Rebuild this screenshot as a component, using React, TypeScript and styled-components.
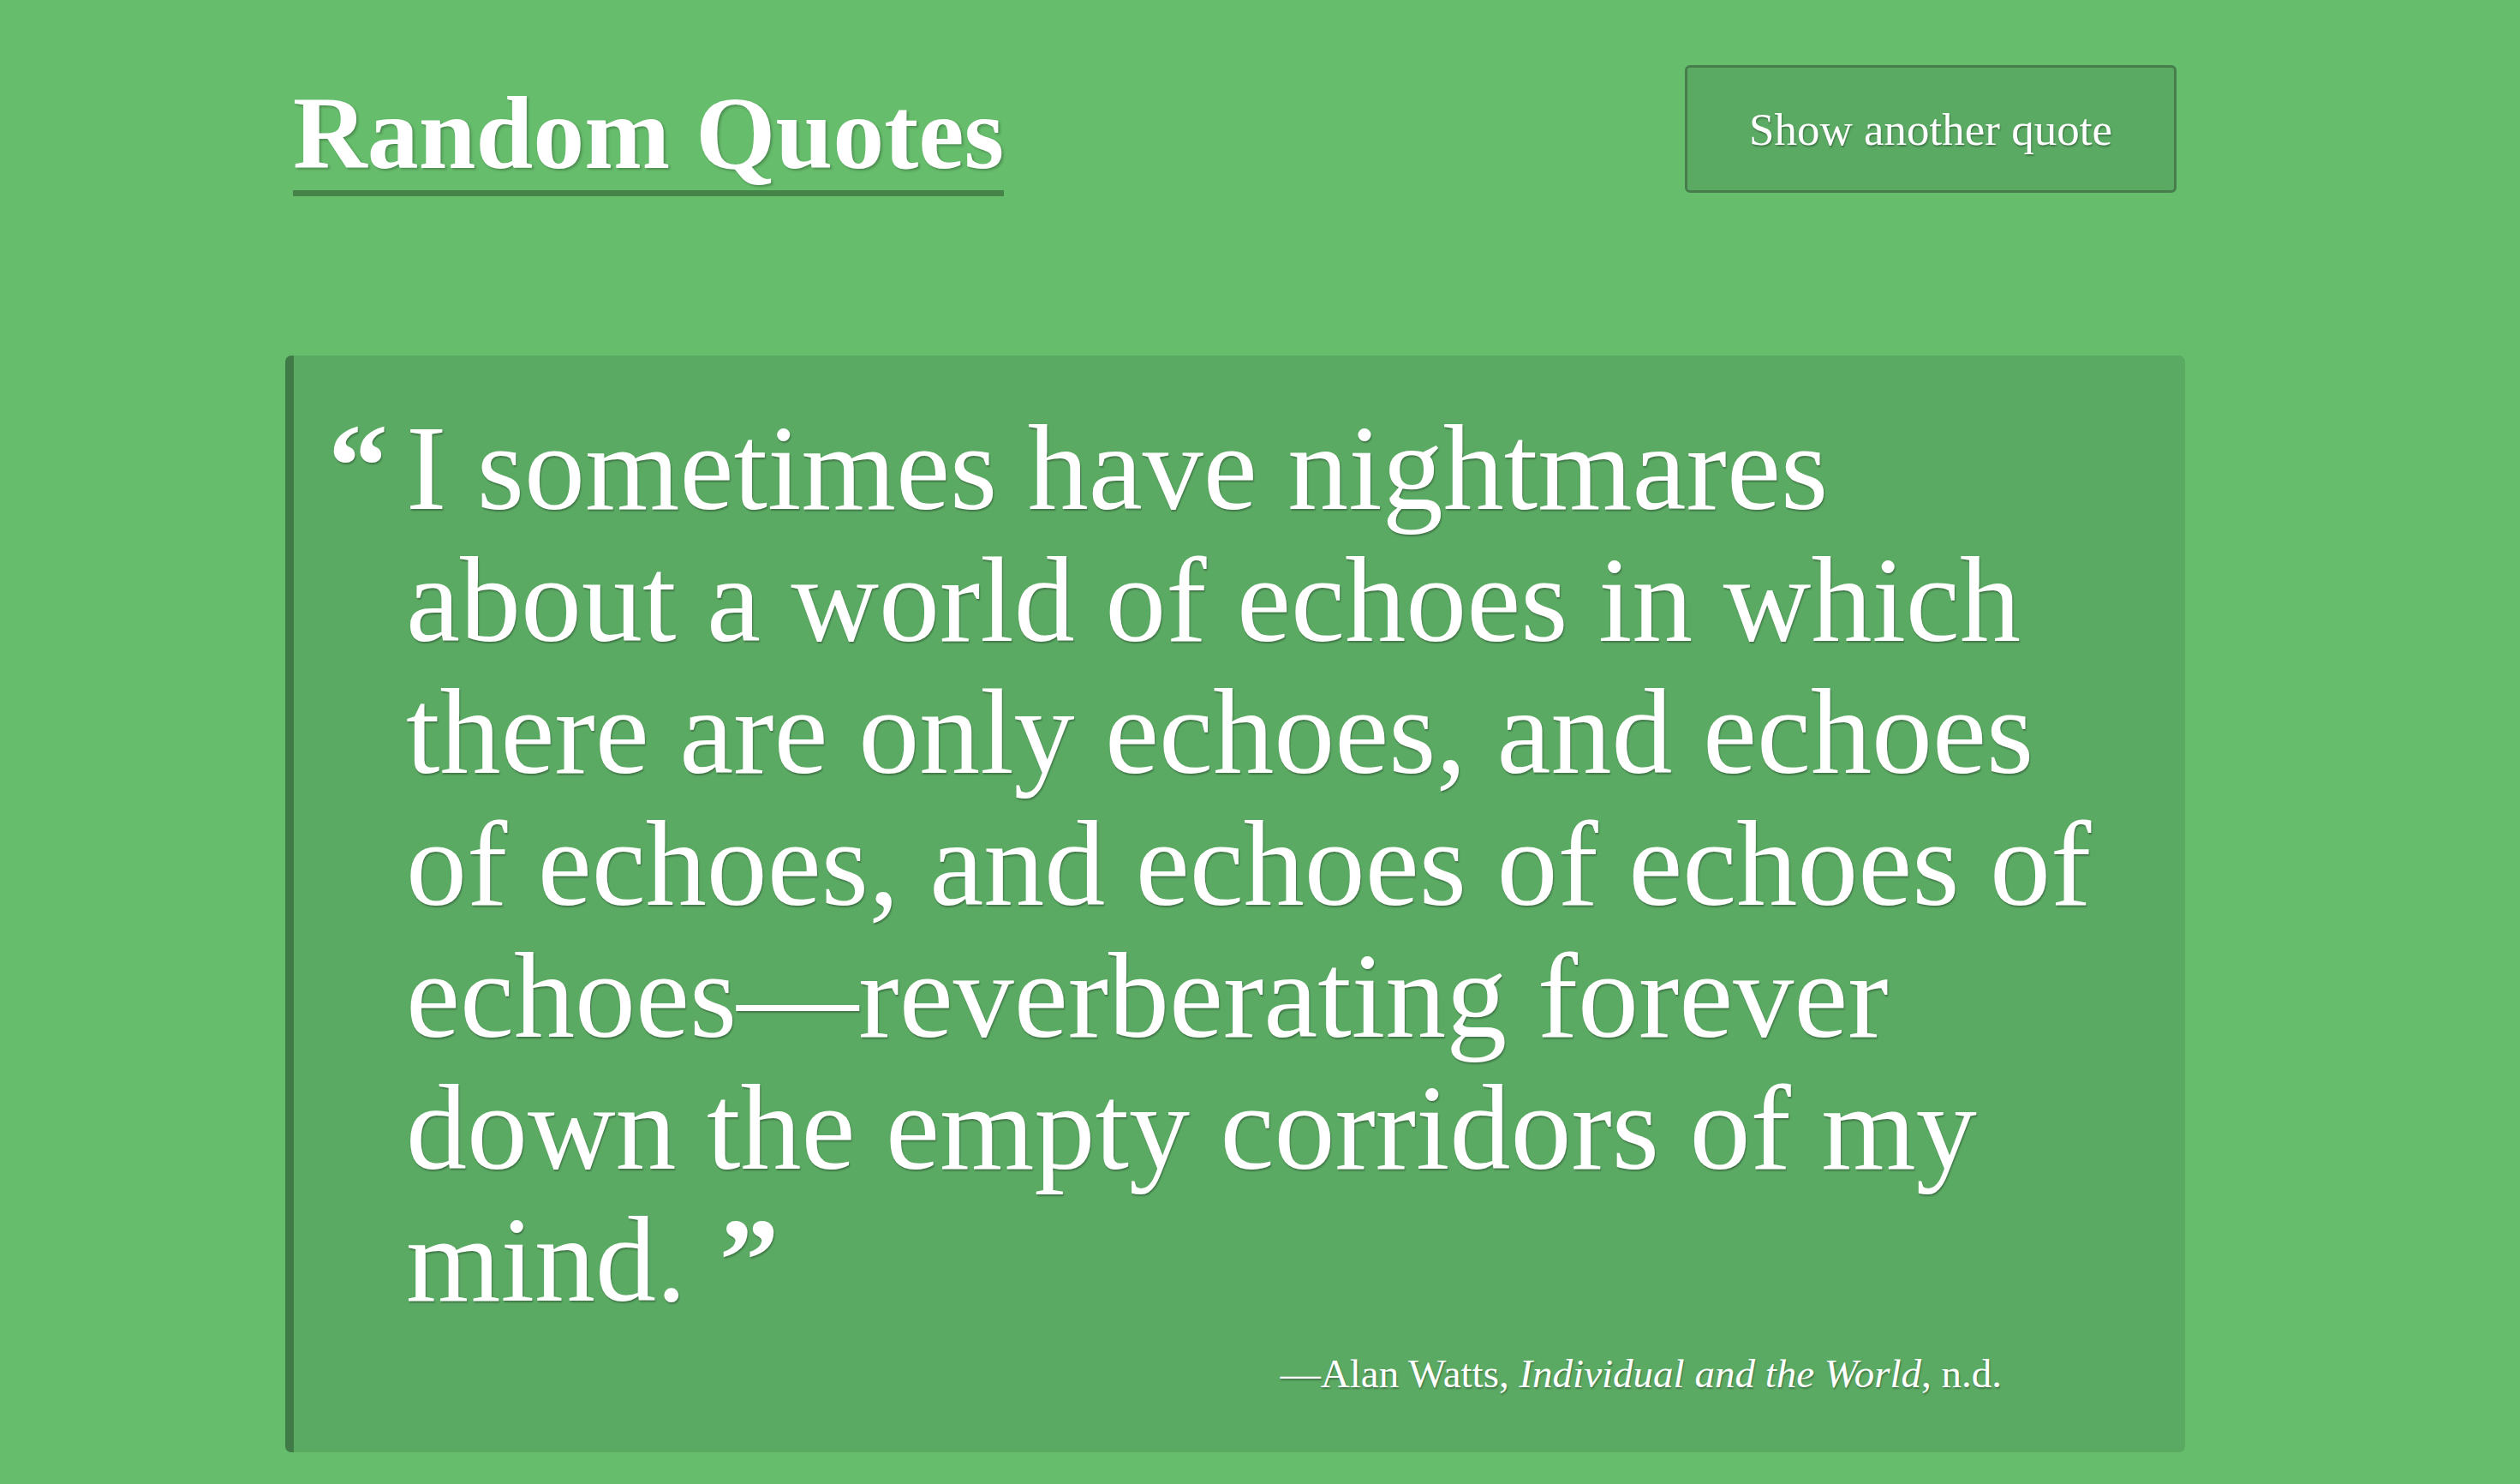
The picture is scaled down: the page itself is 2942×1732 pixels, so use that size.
import React from "react";
import styled, { createGlobalStyle } from "styled-components";

const Global = createGlobalStyle`
  html, body {
    margin: 0;
    padding: 0;
    background: #66bd6c;
  }
  body {
    font-family: "Liberation Serif", "DejaVu Serif", serif;
    color: #ffffff;
  }
`;

const Page = styled.div`
  min-height: 1732px;
  background: #66bd6c;
  padding-left: 333px;
  box-sizing: border-box;
`;

const Container = styled.div`
  width: 2218px;
`;

const Header = styled.header`
  display: flex;
  justify-content: space-between;
  align-items: flex-start;
  padding: 76px 10px 0 9px;
`;

const Title = styled.h1`
  margin: 20px 0 0 0;
  font-family: "Liberation Serif", serif;
  font-weight: 700;
  font-size: 120px;
  line-height: 1;
  padding-bottom: 6px;
  border-bottom: 7px solid #468349;
  color: #ffffff;
  text-shadow: 2px 2px 3px rgba(0, 0, 0, 0.25);
`;

const Button = styled.button`
  width: 574px;
  height: 149px;
  box-sizing: border-box;
  background: #5baa64;
  border: 3px solid #467d4a;
  border-radius: 6px;
  color: #ffffff;
  font-family: "Liberation Serif", serif;
  font-size: 53px;
  text-shadow: 1px 2px 2px rgba(0, 0, 0, 0.3);
  cursor: pointer;
  padding: 0;
`;

const Card = styled.blockquote`
  margin: 186px 0 0 0;
  background: #5baa64;
  border-left: 10px solid #407a46;
  border-radius: 7px;
  padding: 54px 87px 65px 40px;
  box-sizing: border-box;
`;

const QuoteRow = styled.div`
  display: flex;
  align-items: flex-start;
`;

const Mark = styled.span`
  flex: 0 0 91px;
  margin-top: 5px;
  font-family: "Liberation Serif", serif;
  font-weight: 700;
  font-size: 140px;
  line-height: 1;
  text-shadow: 1px 2px 2px rgba(0, 0, 0, 0.3);
`;

const QuoteText = styled.p`
  flex: 1;
  margin: 0;
  font-family: "Liberation Serif", serif;
  font-size: 142px;
  line-height: 154px;
  text-shadow: 1px 2px 2px rgba(0, 0, 0, 0.3);
`;

const CloseMark = styled.span`
  font-weight: 700;
  font-size: 140px;
  margin-left: 38px;
`;

const Attribution = styled.footer`
  margin: 28px 127px 0 0;
  text-align: right;
  font-family: "Liberation Serif", serif;
  font-size: 47px;
  line-height: 54px;
  text-shadow: 1px 2px 2px rgba(0, 0, 0, 0.3);
`;

export default function App() {
  return (
    <>
      <Global />
      <Page>
        <Container>
          <Header>
            <Title>Random Quotes</Title>
            <Button>Show another quote</Button>
          </Header>
          <Card>
            <QuoteRow>
              <Mark>“</Mark>
              <QuoteText>
                I sometimes have nightmares about a world of echoes in which there are only
                echoes, and echoes of echoes, and echoes of echoes of echoes—reverberating
                forever down the empty corridors of my mind.<CloseMark>”</CloseMark>
              </QuoteText>
            </QuoteRow>
            <Attribution>
              —Alan Watts, <i>Individual and the World</i>, n.d.
            </Attribution>
          </Card>
        </Container>
      </Page>
    </>
  );
}
